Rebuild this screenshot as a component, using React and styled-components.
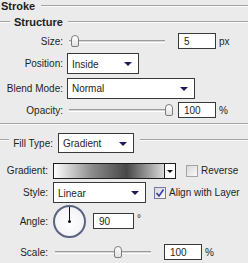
import React from 'react';
import styled, { createGlobalStyle } from 'styled-components';

const GlobalStyle = createGlobalStyle`
  html, body {
    margin: 0;
    padding: 0;
    background: #ebebeb;
    overflow: hidden;
  }
  body {
    font-family: "Liberation Sans", Arial, sans-serif;
    font-size: 10px;
    color: #1e1e1e;
  }
`;

const Panel = styled.div`
  width: 248px;
  height: 263px;
  display: flex;
  flex-direction: column;
`;

const Row = styled.div`
  display: flex;
  align-items: center;
  height: ${(p) => p.h}px;
  flex: none;
`;

// grooved divider line, fixed width or filling the rest of the row
const Etched = styled.div`
  height: 0;
  border-top: 1px solid #a3a3a3;
  border-bottom: 1px solid #fafafa;
  flex: ${(p) => (p.w ? 'none' : '1')};
  width: ${(p) => (p.w ? `${p.w}px` : 'auto')};
  margin-left: ${(p) => p.ml || 0}px;
  margin-bottom: ${(p) => p.lift || 0}px;
`;

const Title = styled.span`
  font-weight: bold;
  font-size: 11px;
  padding-left: 1px;
  margin-right: 6px;
`;

const Legend = styled.span`
  font-weight: bold;
  font-size: 11px;
  margin: 0 5px 0 4px;
`;

const Label = styled.span`
  width: ${(p) => p.w}px;
  text-align: right;
  margin-right: ${(p) => p.gap}px;
  flex: none;
`;

const Select = styled.div`
  box-sizing: border-box;
  width: ${(p) => p.w}px;
  height: ${(p) => p.hgt || 21}px;
  background: #fff;
  border: 1px solid #3a3a3a;
  display: flex;
  align-items: center;
  justify-content: space-between;
  padding: 1px 6px 0 4px;
  flex: none;
`;

const Arrow = styled.span`
  width: 0;
  height: 0;
  border-left: 4px solid transparent;
  border-right: 4px solid transparent;
  border-top: 4px solid #1b1b5e;
`;

const Slider = styled.div`
  position: relative;
  width: 102px;
  height: 14px;
  display: flex;
  align-items: center;
  padding: 0 4px 0 2px;
  box-sizing: border-box;
  flex: none;
  margin: 0 9px 0 ${(p) => p.ml || 0}px;
`;

const Track = styled.div`
  flex: 1;
  height: 1px;
  background: #d6d6d6;
  border-top: 1px solid #9c9c9c;
  border-bottom: 1px solid #fff;
`;

const Thumb = styled.div`
  position: absolute;
  left: ${(p) => p.x}px;
  top: 1px;
  width: 6px;
  height: 10px;
  border: 1px solid #7c7c7c;
  border-radius: 4px 4px 2px 2px;
  background: linear-gradient(#ffffff, #e2e2e2);
`;

const Field = styled.div`
  box-sizing: border-box;
  width: ${(p) => p.w || 38}px;
  height: 16px;
  background: #fff;
  border: 1px solid #3a3a3a;
  padding: 1px 0 0 5px;
  line-height: 13px;
  flex: none;
`;

const Unit = styled.span`
  margin-left: 3px;
  align-self: ${(p) => (p.sup ? 'flex-start' : 'auto')};
  margin-top: ${(p) => (p.sup ? 9 : 0)}px;
`;

const Swatch = styled.div`
  box-sizing: border-box;
  width: 123px;
  height: 16px;
  border: 1px solid #1e1e1e;
  display: flex;
  flex: none;
`;

const Ramp = styled.div`
  flex: 1;
  background: linear-gradient(to right, #ffffff 0%, #8a8a8a 35%, #474747 66%, #dadada 100%);
  border-right: 1px solid #1e1e1e;
`;

const RampButton = styled.div`
  width: 10px;
  background: #fff;
  display: flex;
  align-items: center;
  justify-content: center;
  padding-top: 1px;
  box-sizing: border-box;
`;

const SmallArrow = styled.span`
  width: 0;
  height: 0;
  border-left: 3px solid transparent;
  border-right: 3px solid transparent;
  border-top: 3px solid #111;
`;

const Check = styled.div`
  box-sizing: border-box;
  width: 12px;
  height: 12px;
  margin: 0 3px 0 ${(p) => p.ml}px;
  border: 1px solid ${(p) => (p.on ? '#7878a8' : '#a4a4a4')};
  background: linear-gradient(135deg, #d8d8d8, #fbfbfb);
  display: flex;
  align-items: center;
  justify-content: center;
  flex: none;
`;

const Dial = styled.div`
  position: relative;
  box-sizing: border-box;
  width: 33px;
  height: 33px;
  border-radius: 50%;
  border: 2px solid #5b6380;
  background: radial-gradient(circle at 50% 55%, #ffffff, #eeeef2);
  margin-right: 7px;
  flex: none;
`;

const DialHand = styled.div`
  position: absolute;
  left: 14px;
  top: 0;
  width: 1px;
  height: 15px;
  background: #111;
`;

const DialDot = styled.div`
  position: absolute;
  left: 13px;
  top: 13px;
  width: 3px;
  height: 3px;
  border-radius: 50%;
  background: #111;
`;

export default function App() {
  return (
    <Panel>
      <GlobalStyle />
      <Row h={12}>
        <Title>Stroke</Title>
        <Etched />
      </Row>
      <Row h={20}>
        <Etched w={10} />
        <Legend>Structure</Legend>
        <Etched />
      </Row>
      <Row h={18}>
        <Label w={63} gap={4}>Size:</Label>
        <Slider>
          <Track />
          <Thumb x={4} />
        </Slider>
        <Field>5</Field>
        <Unit>px</Unit>
      </Row>
      <Row h={27}>
        <Label w={63} gap={4}>Position:</Label>
        <Select w={72}>
          Inside
          <Arrow />
        </Select>
      </Row>
      <Row h={22}>
        <Label w={63} gap={4}>Blend Mode:</Label>
        <Select w={128}>
          Normal
          <Arrow />
        </Select>
      </Row>
      <Row h={22}>
        <Label w={63} gap={4}>Opacity:</Label>
        <Slider>
          <Track />
          <Thumb x={98} />
        </Slider>
        <Field>100</Field>
        <Unit>%</Unit>
      </Row>
      <Row h={5}>
        <Etched />
      </Row>
      <Row h={34}>
        <Etched w={9} lift={6} />
        <Label w={44} gap={5}>Fill Type:</Label>
        <Select w={76} hgt={20}>
          Gradient
          <Arrow />
        </Select>
        <Etched lift={6} ml={6} />
      </Row>
      <Row h={21}>
        <Label w={48} gap={5}>Gradient:</Label>
        <Swatch>
          <Ramp />
          <RampButton>
            <SmallArrow />
          </RampButton>
        </Swatch>
        <Check ml={10} />
        Reverse
      </Row>
      <Row h={23}>
        <Label w={48} gap={5}>Style:</Label>
        <Select w={93}>
          Linear
          <Arrow />
        </Select>
        <Check ml={8} on>
          <svg width="10" height="10" viewBox="0 0 10 10">
            <path d="M1.5 5 L4 8 L8.5 1.5" fill="none" stroke="#3a3aa8" strokeWidth="1.6" />
          </svg>
        </Check>
        Align with Layer
      </Row>
      <Row h={34}>
        <Label w={48} gap={5}>Angle:</Label>
        <Dial>
          <DialHand />
          <DialDot />
        </Dial>
        <Field w={41}>90</Field>
        <Unit sup>°</Unit>
      </Row>
      <Row h={28}>
        <Label w={48} gap={0}>Scale:</Label>
        <Slider ml={5}>
          <Track />
          <Thumb x={61} />
        </Slider>
        <Field>100</Field>
        <Unit>%</Unit>
      </Row>
    </Panel>
  );
}
